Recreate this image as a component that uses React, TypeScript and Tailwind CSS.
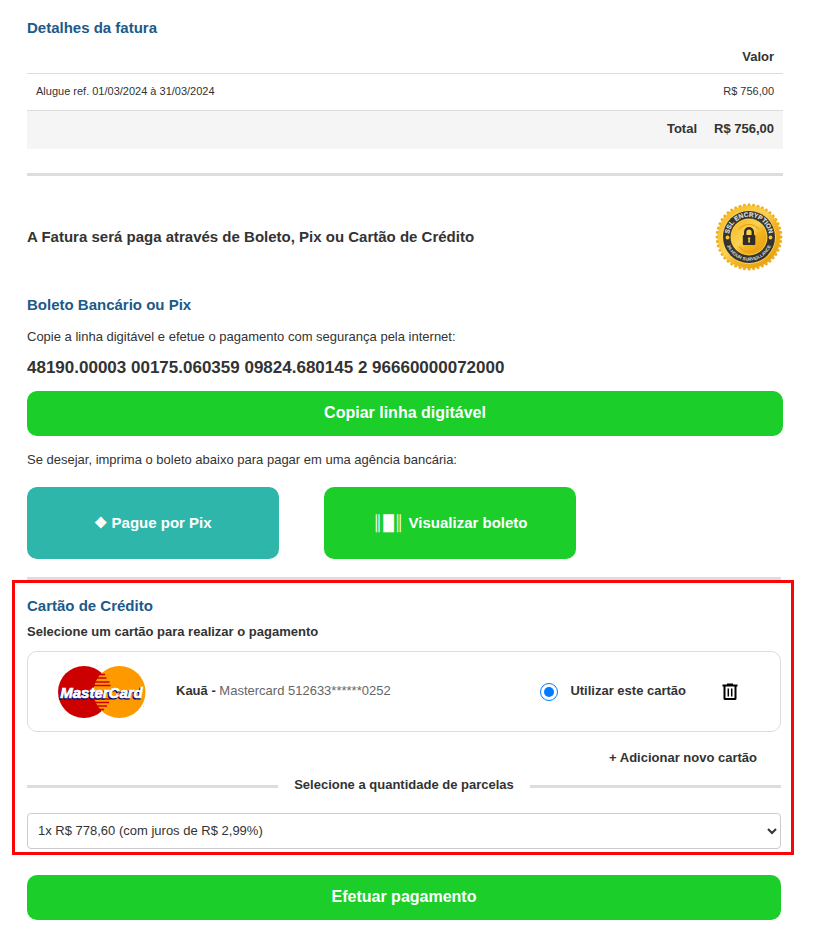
import React, { useState } from "react";

const installments = [{ id: 1, label: "1x R$ 778,60 (com juros de R$ 2,99%)" }];

const sealTeeth = Array.from({ length: 44 }, (_, i) => (i * 360) / 44);

const SslSeal = () => (
  <svg viewBox="0 0 68 68" className="w-[68px] h-[68px] shrink-0" role="img" aria-label="SSL Encryption">
    <defs>
      <linearGradient id="gold" x1="0" y1="0" x2="1" y2="1">
        <stop offset="0" stopColor="#f6b81c" />
        <stop offset="0.45" stopColor="#fbd253" />
        <stop offset="0.6" stopColor="#f3b41f" />
        <stop offset="1" stopColor="#e49a0c" />
      </linearGradient>
      <path id="sealTop" d="M13.8 34a20.2 20.2 0 0 1 40.4 0" />
      <path id="sealBottom" d="M10.300 34a23.700 23.700 0 0 0 47.400 0" />
    </defs>
    {/* scalloped edge */}
    {sealTeeth.map((deg) => (
      <path key={deg} d="M31.6 4.200L33 .6h2L36.400 4.200z" fill="#f0b023" transform={`rotate(${deg} 34 34)`} />
    ))}
    <circle cx="34" cy="34" r="31" fill="url(#gold)" />
    <circle cx="34" cy="34" r="27" fill="#f9cf55" />
    <circle cx="34" cy="34" r="26" fill="#35342f" />
    <circle cx="34" cy="34" r="18.5" fill="#f9cd4a" />
    <circle cx="34" cy="34" r="17.5" fill="url(#gold)" />
    <path d="M24 26.500a12.500 12.500 0 0 1 20 0M24 43.500a12.500 12.500 0 0 0 20 0" fill="none" stroke="#e6a11b" strokeWidth="1.200" />
    <circle cx="12.500" cy="34.500" r="1.900" fill="#f7c63c" />
    <circle cx="55.500" cy="34.500" r="1.900" fill="#f7c63c" />
    <text fontSize="6.500" fontWeight="700" fill="#deded9" stroke="#deded9" strokeWidth=".2" textAnchor="middle">
      <textPath href="#sealTop" startOffset="50%">SSL ENCRYPTION</textPath>
    </text>
    <text fontSize="4.500" fontWeight="700" fill="#deded9" textAnchor="middle">
      <textPath href="#sealBottom" startOffset="50%">24-HOUR SURVEILLANCE</textPath>
    </text>
    {/* padlock */}
    <path d="M30.200 33v-4a3.800 3.800 0 0 1 7.600 0v4" fill="none" stroke="#2e2d29" strokeWidth="2.400" />
    <rect x="27.800" y="32" width="12.500" height="10" rx="1" fill="#2e2d29" />
    <path d="M34.100 34.300a1.200 1.200 0 0 1 .7 2.200l.4 2.900h-2.200l.4-2.900a1.200 1.200 0 0 1 .7-2.200z" fill="#f5bd30" />
  </svg>
);

const MasterCardLogo = () => (
  <svg viewBox="0 0 88 52" className="w-[88px] h-[52px] shrink-0" role="img" aria-label="MasterCard">
    <circle cx="26" cy="26" r="26" fill="#cc0000" />
    <circle cx="61.500" cy="26" r="26" fill="#ff9900" />
    <path
      d="M42 8.500h5M39 12h9.500M37 16h14.500M36 19.500h16.500M36 33h16.500M37 36.500h14M38.500 40h10.500M41 43.500h5"
      stroke="#cc0000"
      strokeWidth="1.700"
    />
    <g
      fontFamily="'Liberation Sans', sans-serif"
      fontSize="15"
      fontWeight="700"
      fontStyle="italic"
      textAnchor="middle"
    >
      <text x="42.500" y="32.500" fill="#000066" stroke="#000066" strokeWidth="1.200">MasterCard</text>
      <text x="43.500" y="31.500" fill="#fff" stroke="#fff" strokeWidth=".7">MasterCard</text>
    </g>
    <circle cx="85.500" cy="40.500" r=".5" fill="#ffb84d" />
  </svg>
);

const TrashIcon = () => (
  <svg viewBox="0 0 16 18" className="w-4 h-[18px]" fill="none" stroke="#000" strokeWidth="2" aria-hidden="true">
    <path d="M.5 2.500h15M5 1.500h6" />
    <path d="M2.500 3v12.500q0 .5 .5 .5h10q.5 0 .5-.5V3" />
    <path d="M6.300 5.500v8M9.700 5.500v8" strokeWidth="1.500" />
  </svg>
);

const App = () => {
  const [useCard, setUseCard] = useState(true);

  return (
    <main className="bg-white text-[#333] text-[13px] leading-5 font-['Liberation_Sans',Arial,sans-serif] pt-[18px] pb-[21px]">
      {/* invoice details */}
      <section className="pl-[27px] pr-[31px]">
        <h2 className="text-[15px] font-bold text-[#1b5a8a]">Detalhes da fatura</h2>
        <table className="w-full mt-[3px] border-collapse text-right">
          <thead>
            <tr className="h-8 border-b border-[#ddd]">
              <td></td>
              <th className="text-right font-bold px-[9px]">Valor</th>
            </tr>
          </thead>
          <tbody>
            <tr className="h-[37px] border-b border-[#ddd] text-[11px]">
              <td className="text-left px-[9px] pb-[2px]">Alugue ref. 01/03/2024 à 31/03/2024</td>
              <td className="px-[9px] pb-[2px]">R$ 756,00</td>
            </tr>
          </tbody>
          <tfoot>
            <tr className="h-[39px] bg-[#f5f5f5] font-bold">
              <td className="px-2 pb-[2px]">Total</td>
              <td className="w-[76px] px-[9px] pb-[2px] whitespace-nowrap">R$ 756,00</td>
            </tr>
          </tfoot>
        </table>
        <hr className="border-t-3 border-[#ddd] mt-6" />
      </section>

      {/* boleto and pix */}
      <section className="pl-[27px] pr-[31px] pt-[27px]">
        <div className="flex items-center justify-between">
          <p className="text-[15px] font-bold">A Fatura será paga através de Boleto, Pix ou Cartão de Crédito</p>
          <SslSeal />
        </div>
        <h2 className="text-[15px] font-bold text-[#1b5a8a] mt-6">Boleto Bancário ou Pix</h2>
        <p className="mt-3">Copie a linha digitável e efetue o pagamento com segurança pela internet:</p>
        <p className="mt-[11px] text-[17px] font-bold">48190.00003 00175.060359 09824.680145 2 96660000072000</p>
        <button
          type="button"
          className="w-full h-[45px] mt-[13px] pb-[2px] rounded-[10px] bg-[#1bce2a] text-white text-base font-bold cursor-pointer"
        >
          Copiar linha digitável
        </button>
        <p className="mt-[14px]">Se desejar, imprima o boleto abaixo para pagar em uma agência bancária:</p>
        <div className="flex gap-[45px] mt-[17px]">
          <button
            type="button"
            className="w-1/3 h-[72px] rounded-[10px] bg-[#2fb6aa] text-white text-[15px] font-bold cursor-pointer"
          >
            ❖ Pague por Pix
          </button>
          <button
            type="button"
            className="w-1/3 h-[72px] rounded-[10px] bg-[#1bce2a] text-white text-[15px] font-bold cursor-pointer"
          >
            ║█║ Visualizar boleto
          </button>
        </div>
      </section>
      <hr className="border-t-3 border-[#ddd] mt-[18px] ml-[27px] mr-[33px]" />

      {/* credit card */}
      <section className="ml-3 mr-5 border-3 border-[#fa0505] pl-3 pr-[10px] pt-[13px] pb-[3px]">
        <h2 className="text-[15px] font-bold text-[#1b5a8a]">Cartão de Crédito</h2>
        <p className="mt-[6px] font-bold">Selecione um cartão para realizar o pagamento</p>
        <div className="flex items-center h-[81px] mt-[9px] pl-[30px] pr-[42px] border border-[#ddd] rounded-[10px]">
          <MasterCardLogo />
          <p className="ml-[30px] pb-[2px] text-[#666]">
            <b className="text-[#333]">Kauã - </b>Mastercard 512633******0252
          </p>
          <label className="flex items-center gap-3 ml-auto font-bold">
            <input
              type="radio"
              name="card"
              checked={useCard}
              onChange={() => setUseCard(true)}
              className="appearance-none w-[18px] h-[18px] rounded-full border border-[#007bff] bg-white p-[3px] bg-clip-content checked:bg-[#007bff]"
            />
            <span className="pb-[2px]">Utilizar este cartão</span>
          </label>
          <button type="button" aria-label="Remover cartão" className="ml-9 cursor-pointer">
            <TrashIcon />
          </button>
        </div>
        <div className="flex justify-end mt-4 pr-6">
          <button type="button" className="font-bold cursor-pointer">+ Adicionar novo cartão</button>
        </div>
        <div className="grid grid-cols-3 items-center mt-[7px]">
          <hr className="border-t-3 border-[#ddd] mt-[2px]" />
          <label htmlFor="installments" className="text-center font-bold whitespace-nowrap">
            Selecione a quantidade de parcelas
          </label>
          <hr className="border-t-3 border-[#ddd] mt-[2px]" />
        </div>
        <select
          id="installments"
          className="block w-full h-9 mt-[18px] pl-[6px] pr-0 pb-[2px] border border-[#ccc] rounded-[4px] bg-white text-[13px] text-[#333]"
        >
          {installments.map((item) => (
            <option key={item.id} value={item.id}>{item.label}</option>
          ))}
        </select>
      </section>

      <div className="pl-[27px] pr-[33px] mt-5">
        <button
          type="button"
          className="w-full h-[45px] pb-[2px] rounded-[10px] bg-[#1bce2a] text-white text-base font-bold cursor-pointer"
        >
          Efetuar pagamento
        </button>
      </div>
    </main>
  );
};

export default App;
